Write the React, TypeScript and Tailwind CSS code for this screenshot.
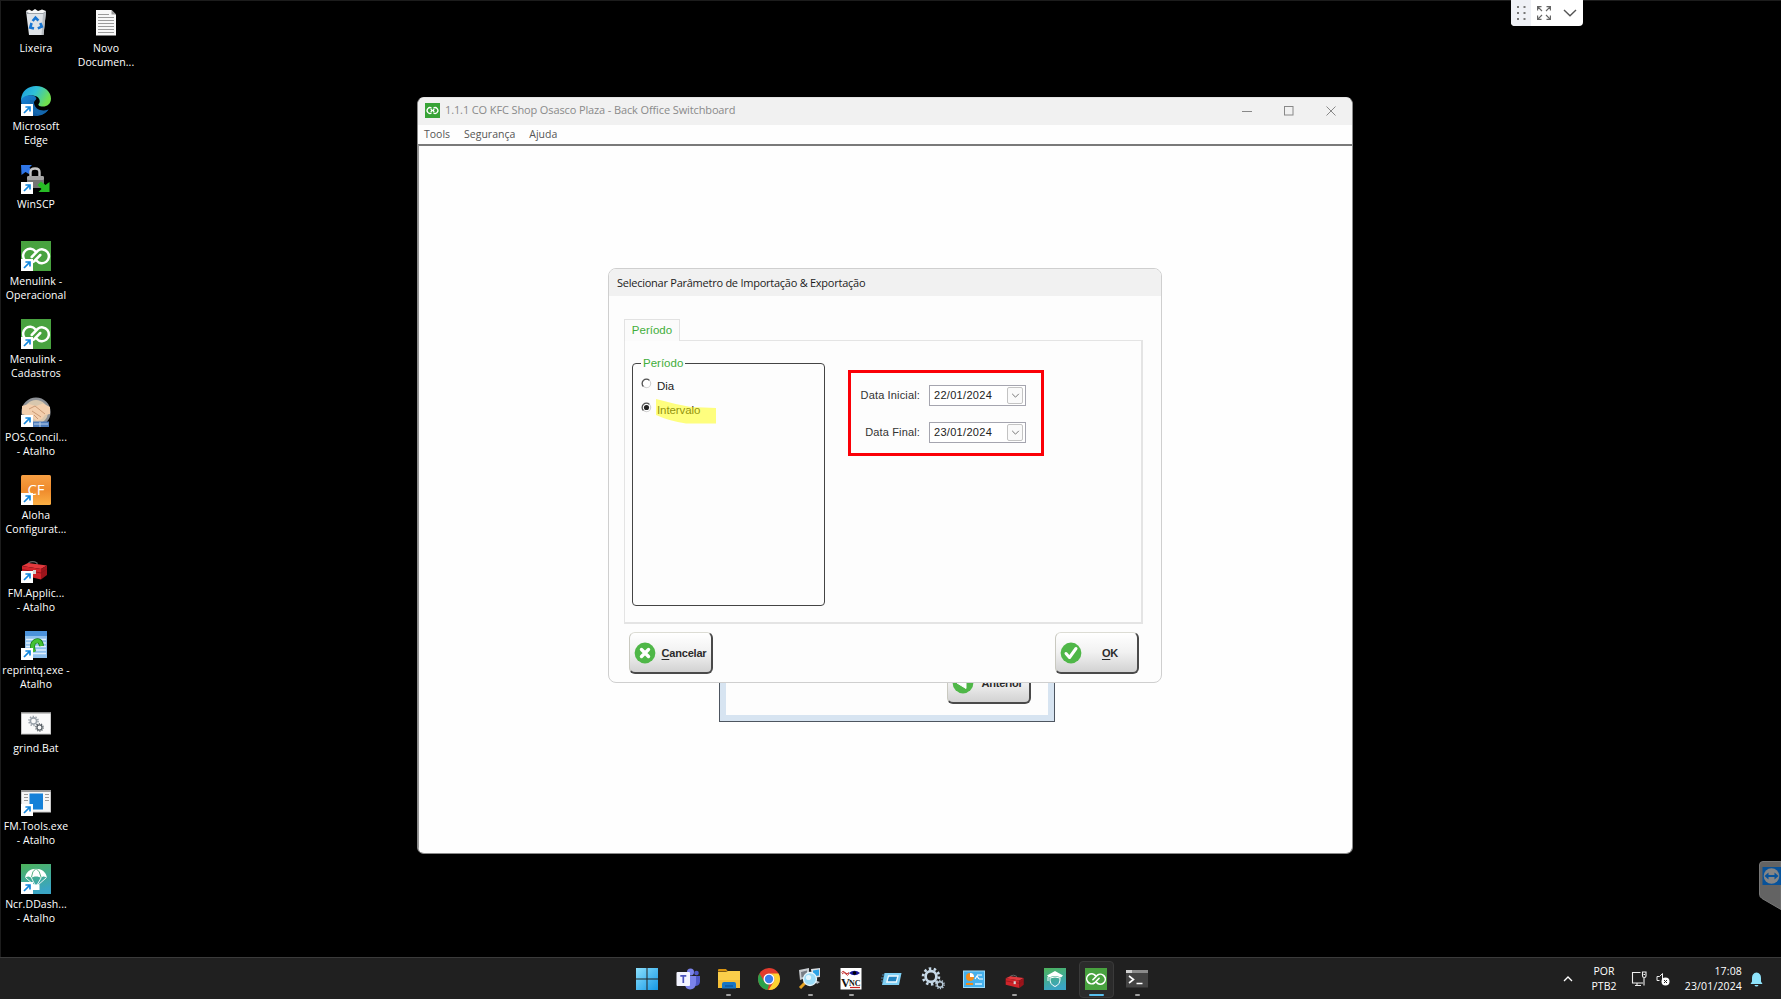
import React, { type ReactNode } from 'react';

/* ---------- Shared glyphs ---------- */

function ShortcutArrow() {
  return (
    <g>
      <rect x="0" y="18" width="12" height="12" fill="#fff" />
      <path d="M3 27 L8.6 21.4 M4.4 21 H9 V25.6" stroke="#1487dd" strokeWidth="1.7" fill="none" />
    </g>
  );
}

function Rings({ width = 2.5 }: { width?: number }) {
  return (
    <g fill="none" stroke="#fff" strokeWidth={width} strokeLinecap="round">
      <path d="M14.300 10.300 A6.900 6.900 0 1 0 13.200 20.200 L19.300 14" />
      <path d="M15.700 19.700 A6.900 6.900 0 1 0 16.800 9.800 L10.700 16" />
    </g>
  );
}

function Gear({ cx, cy, r, color }: { cx: number; cy: number; r: number; color: string }) {
  return (
    <g transform={`translate(${cx} ${cy})`} fill="none" stroke={color}>
      <circle r={r * 0.6} strokeWidth={r * 0.3} />
      <circle r={r * 0.88} strokeWidth={r * 0.3} strokeDasharray={`${r * 0.276} ${r * 0.277}`} />
    </g>
  );
}

function Toolbox() {
  return (
    <g>
      <path d="M8 12 V9.500 Q12 7.500 16 10 V13" fill="none" stroke="#666" strokeWidth="1.300" />
      <path d="M1 13 L7 10 L26 12.500 L20 16Z" fill="#e2393d" />
      <path d="M1 13 L20 16 V26.500 L1 22Z" fill="#d0242a" />
      <path d="M20 16 L26 12.500 V22 L20 26.500Z" fill="#9c141b" />
      <path d="M1 16.500 L20 20 L26 16" fill="none" stroke="#8e1218" strokeWidth="0.900" />
      <rect x="12" y="17" width="3" height="4" fill="#d5d5d5" />
    </g>
  );
}

function Icon({ children, shortcut = true }: { children: ReactNode; shortcut?: boolean }) {
  return (
    <svg viewBox="0 0 30 30" className="block h-[30px] w-[30px] shrink-0">
      {children}
      {shortcut && <ShortcutArrow />}
    </svg>
  );
}

/* ---------- Desktop icons ---------- */

const recycleBin = (
  <Icon shortcut={false}>
    <path d="M5 3 L25 3 L22.5 27 H8Z" fill="#dfe3e7" />
    <path d="M5 3 L25 3 L24.7 6 L5.3 6Z" fill="#9da3a9" />
    <path d="M5 3 L8 1.500 L11 3 L14 1 L17 3 L21 1.500 L25 3 L22 5 H8Z" fill="#f7f7f7" />
    <path d="M22 6 L20.5 27 H22.500 L25 4Z" fill="#b8bdc2" />
    <g fill="none" stroke="#1976d2" strokeWidth="2.6">
      <path d="M11.6 13 L14.5 9.6 L17.4 12.6" />
      <path d="M19.3 15 L20.8 18.6 L16.8 20.4" />
      <path d="M13 20.6 L9.2 19.6 L10.6 15" />
    </g>
  </Icon>
);

const edge = (
  <Icon>
    <defs>
      <linearGradient id="edgeTop" x1="0" y1="0" x2="1" y2="0.4">
        <stop offset="0" stopColor="#1a9be0" />
        <stop offset="0.5" stopColor="#2fc0d8" />
        <stop offset="1" stopColor="#6fe04f" />
      </linearGradient>
      <linearGradient id="edgeLow" x1="0" y1="0" x2="1" y2="1">
        <stop offset="0" stopColor="#1a86d8" />
        <stop offset="1" stopColor="#0c4c8f" />
      </linearGradient>
    </defs>
    <path d="M0 13 C1 5 7 0 15 0 C24 0 30 6 30 12.500 C30 18 26 20.500 22 20.500 C18 20.500 16.500 19 18 17.500 C20 15 18 10 12 9.500 C7 9 2 11 0 15Z" fill="url(#edgeTop)" />
    <path d="M0 14 C2 10 7 8.500 11.500 9.500 C15 10.300 16 12.500 15 13.500 C11 16 12 24 21 25 C24 25.200 26 24.500 27.500 23.500 C25 27.500 20 30 15 30 C6 30 0 23 0 14Z" fill="url(#edgeLow)" />
    <path d="M9 14 C9 22 13 29 20 29 C23 28 26 25.500 27.500 23.500 C22 26 12 24 13 14.500Z" fill="#1467ad" />
  </Icon>
);

const winscp = (
  <Icon>
    <path d="M0 1 H11 L8.500 3.500 L11 7 L8 10 L4.500 8 L0.500 11Z" fill="#2f76e8" />
    <path d="M9.500 13 V8 Q9.500 4.500 14 4.500 Q18.500 4.500 18.500 8 V13" fill="none" stroke="#c4c4c4" strokeWidth="2.400" />
    <rect x="6" y="12" width="17" height="12" rx="1.500" fill="#747474" />
    <rect x="6" y="12" width="17" height="4" rx="1.500" fill="#a5a5a5" />
    <path d="M28.500 28 H17.500 L20.500 25 L16.500 21 L20 17.500 L24.500 21 L28.500 18Z" fill="#27bd25" />
  </Icon>
);

const menulink = (
  <Icon>
    <rect width="30" height="30" fill="#48a23f" />
    <Rings />
  </Icon>
);

const pos = (
  <Icon>
    <circle cx="15" cy="15" r="13.300" fill="#d8c7ae" stroke="#8e9196" strokeWidth="2.600" />
    <path d="M1 9 L8 7 L15 9 L22 6.500 L29 10 V17 L24 18 L21 22 L16 24 L9 19 L1 17Z" fill="#f3cfae" />
    <path d="M8 12 L14 9 L24 17 M11 14 L20 20 M13 18 L17 22" stroke="#c08c66" strokeWidth="0.800" fill="none" />
    <rect x="12" y="24.500" width="16" height="5.500" fill="#4e7dbb" />
    <path d="M13 27 H27 M19 25 V30" stroke="#bcd1ea" />
  </Icon>
);

const configurator = (
  <Icon>
    <defs>
      <linearGradient id="orange" x1="0" y1="0" x2="0" y2="1">
        <stop offset="0" stopColor="#f7a044" />
        <stop offset="0.5" stopColor="#ef8a2c" />
        <stop offset="1" stopColor="#fbb044" />
      </linearGradient>
    </defs>
    <rect width="30" height="30" rx="1.500" fill="url(#orange)" />
    <text x="15" y="20" textAnchor="middle" fontFamily="Open Sans, sans-serif" fontSize="15" fontWeight="500" fill="#fff">
      CF
    </text>
  </Icon>
);

const toolbox = (
  <Icon>
    <Toolbox />
  </Icon>
);

const reprint = (
  <Icon>
    <rect x="4" y="1" width="22" height="27" fill="#8fc1ee" />
    <rect x="4" y="1" width="22" height="5" fill="#4b92da" />
    <path d="M5 9.500 H25 M5 13 H25 M5 16.500 H25 M5 20 H25 M5 23.500 H25" stroke="#e0effc" strokeWidth="1.300" />
    <path d="M12.500 22 Q10 14 14 11.500 Q19.500 9 20.500 16" fill="none" stroke="#16771a" strokeWidth="5" />
    <path d="M12.500 22 Q10 14 14 11.500 Q19.500 9 20.500 16" fill="none" stroke="#43c234" strokeWidth="3.600" />
  </Icon>
);

const grind = (
  <Icon shortcut={false}>
    <rect x="0.500" y="4.500" width="29" height="21.500" fill="#fafafa" stroke="#c9c9c9" />
    <rect x="0" y="4" width="30" height="1.500" fill="#8d8d8d" />
    <Gear cx={12.5} cy={13} r={5.2} color="#9ba3ab" />
    <Gear cx={18.5} cy={19.500} r={4.200} color="#596066" />
  </Icon>
);

const fmTools = (
  <Icon>
    <rect x="0.500" y="4.500" width="29" height="21.500" fill="#f6f6f6" stroke="#c9c9c9" />
    <rect x="0" y="4" width="30" height="2" fill="#999" />
    <rect x="8.500" y="7.500" width="13.500" height="16" fill="#1480d8" />
    <path d="M3 8.500 H7 M3 11.500 H7 M3 14.500 H7 M24 8.500 H28 M24 11.500 H28 M24 14.500 H28" stroke="#9a9a9a" />
  </Icon>
);

const dashboard = (
  <Icon>
    <defs>
      <linearGradient id="teal" x1="0" y1="0" x2="0.300" y2="1">
        <stop offset="0" stopColor="#4db35a" />
        <stop offset="1" stopColor="#3aa5c4" />
      </linearGradient>
    </defs>
    <rect width="30" height="30" fill="url(#teal)" />
    <path d="M4 14 C5 1.500 25 1.500 26 14 C24 12 21.500 12 20 14 C18 12 12 12 10.500 14 C8.500 12 6 12 4 14Z" fill="#fff" />
    <path d="M5 14 L13 21 M25 14 L17 21 M10.500 14 L14 21 M20 14 L16 21" fill="none" stroke="#fff" strokeWidth="0.900" />
    <path d="M10.500 13 Q11 7 15 4.500 Q19 7 20 13" fill="none" stroke="#45aa75" strokeWidth="0.900" />
    <rect x="12" y="20.500" width="6.500" height="5.500" fill="#fff" />
  </Icon>
);

const documentIcon = (
  <Icon shortcut={false}>
    <path d="M5 2 H20.500 L25 6.500 V27.500 H5Z" fill="#f8f8f8" />
    <path d="M20.500 2 V6.500 H25Z" fill="#9b9b9b" />
    <path d="M7 6.500 H18 M7 9.500 H23 M7 12.500 H23 M7 15.500 H23 M7 18.500 H23 M7 21.500 H23 M7 24.500 H23" stroke="#909090" strokeWidth="0.900" />
  </Icon>
);

type DesktopItem = { icon: ReactNode; lines: string[] };

const firstColumn: DesktopItem[] = [
  { icon: recycleBin, lines: ['Lixeira'] },
  { icon: edge, lines: ['Microsoft', 'Edge'] },
  { icon: winscp, lines: ['WinSCP'] },
  { icon: menulink, lines: ['Menulink -', 'Operacional'] },
  { icon: menulink, lines: ['Menulink -', 'Cadastros'] },
  { icon: pos, lines: ['POS.Concil...', '- Atalho'] },
  { icon: configurator, lines: ['Aloha', 'Configurat...'] },
  { icon: toolbox, lines: ['FM.Applic...', '- Atalho'] },
  { icon: reprint, lines: ['reprintq.exe -', 'Atalho'] },
  { icon: grind, lines: ['grind.Bat'] },
  { icon: fmTools, lines: ['FM.Tools.exe', '- Atalho'] },
  { icon: dashboard, lines: ['Ncr.DDash...', '- Atalho'] },
];

const secondColumn: DesktopItem[] = [{ icon: documentIcon, lines: ['Novo', 'Documen...'] }];

function DesktopColumn({ items }: { items: DesktopItem[] }) {
  return (
    <div className="flex w-[70px] flex-col">
      {items.map((item, i) => (
        <div key={i} className="flex h-[77.8px] flex-col items-center">
          {item.icon}
          <div className="mt-[3px] text-center text-[10.5px] leading-[14px] tracking-[0.08px] whitespace-nowrap text-white">
            {item.lines.map((line) => (
              <div key={line}>{line}</div>
            ))}
          </div>
        </div>
      ))}
    </div>
  );
}

/* ---------- Dialog pieces ---------- */

function ActionButton({ glyph, children }: { glyph: ReactNode; children: ReactNode }) {
  return (
    <button className="flex h-[42px] w-[84px] items-center rounded-[6px] border border-t-[#dcdcd4] border-r-2 border-r-[#4a4a4a] border-b-2 border-b-[#4a4a4a] border-l-[#c9c9c0] bg-linear-to-b from-white via-[#f1f1f1] to-[#d2d2d2] pl-[4px] font-['Liberation_Sans',sans-serif] text-[11px] font-bold tracking-[-0.2px] text-[#2b2b2b]">
      <svg viewBox="0 0 22 22" className="h-[22px] w-[22px] shrink-0">
        <circle cx="11" cy="11" r="10.400" fill="#4fb748" />
        {glyph}
      </svg>
      <span className="flex-1 pt-px pl-px text-center">{children}</span>
    </button>
  );
}

function DateField({ label, value }: { label: string; value: string }) {
  return (
    <div className="flex h-[21px] items-center justify-end">
      <span className="mr-[9px] text-[11px] tracking-[0.15px] text-[#333]">{label}</span>
      <div className="flex h-[21px] w-[97px] items-center justify-between border border-[#a5a5af] bg-white pr-[2px] pl-[4px]">
        <span className="text-[11px] tracking-[0.3px] text-[#222]">{value}</span>
        <span className="flex h-[17px] w-[16px] items-center justify-center rounded-[2px] border border-[#c3c3c3] bg-[#fafafa]">
          <svg viewBox="0 0 10 6" className="h-[5px] w-[9px]">
            <path d="M1 1 L5 5 L9 1" fill="none" stroke="#777" strokeWidth="1.200" />
          </svg>
        </span>
      </div>
    </div>
  );
}

function Radio({ label, checked }: { label: string; checked?: boolean }) {
  return (
    <label className="flex h-[24px] items-start">
      <svg viewBox="0 0 12 12" className="mt-[2px] h-[11px] w-[11px]">
        <circle cx="6" cy="6" r="4.600" fill="#fff" stroke="#d0d0d0" strokeWidth="1.200" />
        <path d="M2.600 9.200 A4.600 4.600 0 0 1 9.200 2.600" fill="none" stroke="#555" strokeWidth="1.400" />
        {checked && <circle cx="6" cy="6" r="2.800" fill="#222" />}
      </svg>
      <span className="ml-[5px] pt-[2px] text-[11.5px] leading-[16px] tracking-[-0.1px] text-[#222]">{label}</span>
    </label>
  );
}

function Dialog() {
  return (
    <div className="absolute top-[268px] left-[608px] flex h-[415px] w-[554px] flex-col overflow-hidden rounded-[8px] border border-[#cfcfcf] bg-[#fdfdfd] font-['Liberation_Sans',sans-serif]">
      <div className="flex h-[27px] shrink-0 items-center bg-[#f1f1f1] pt-px pl-[8px] font-['Open_Sans','Noto_Sans',sans-serif] text-[11px] tracking-[-0.25px] text-[#1c1c1c]">
        Selecionar Parâmetro de Importação &amp; Exportação
      </div>
      <div className="flex flex-col pt-[23px] pl-[15px]">
        <div className="z-10 -mb-px flex h-[22px] w-[56px] items-center justify-center border border-b-0 border-[#e2e2e2] bg-[#fbfbfb] text-[11.5px] text-[#3fae3a]">
          Período
        </div>
        <div className="flex h-[284px] w-[519px] border-2 border-t border-l border-[#e4e4e4] pt-[15px] pl-[7px]">
          <fieldset className="h-[250px] w-[193px] rounded-[4px] border border-[#444] px-[8px]">
            <legend className="px-[2px] text-[11.5px] leading-[14px] text-[#3fae3a]">Período</legend>
            <div className="mt-[6px]">
              <Radio label="Dia" />
              <div className="relative">
                <Radio label="Intervalo" checked />
                <svg viewBox="0 0 60 25" className="absolute top-[-1px] left-[15px] h-[25px] w-[60px]">
                  <path d="M0 0 Q18 5 35 8 L60 9 V24.500 H30 Q13 22 0 16Z" fill="#ffff00" fillOpacity="0.5" />
                </svg>
              </div>
            </div>
          </fieldset>
          <div className="mt-[14px] ml-[23px] flex h-[86px] w-[196px] flex-col gap-[16px] border-3 border-[#fb0007] pt-[12px] pr-[15px]">
            <DateField label="Data Inicial:" value="22/01/2024" />
            <DateField label="Data Final:" value="23/01/2024" />
          </div>
        </div>
      </div>
      <div className="mt-[8px] flex justify-between pr-[22px] pl-[20px]">
        <ActionButton glyph={<path d="M7.500 7.500 L14.500 14.500 M14.500 7.500 L7.500 14.500" stroke="#fff" strokeWidth="3.400" strokeLinecap="round" />}>
          <u className="underline-offset-2">C</u>ancelar
        </ActionButton>
        <ActionButton glyph={<path d="M6 11.500 L9.500 15.500 L16 6.500" fill="none" stroke="#fff" strokeWidth="3" strokeLinecap="round" strokeLinejoin="round" />}>
          <u className="underline-offset-2">O</u>K
        </ActionButton>
      </div>
    </div>
  );
}

function BackPanel() {
  return (
    <div className="absolute top-[640px] left-[719px] flex h-[82px] w-[336px] items-start justify-end border border-[#4d5560] bg-[#fdfdfd]">
      <div className="flex h-full w-full items-start justify-end border-[6px] border-t-0 border-[#d7e4f1] pt-[21px] pr-[17px]">
        <ActionButton glyph={<path d="M5 11 L14 5.500 V16.500Z" fill="#fff" stroke="#fff" strokeLinejoin="round" />}>Anterior</ActionButton>
      </div>
    </div>
  );
}

function MainWindow() {
  return (
    <div className="absolute top-[97px] left-[417px] flex h-[757px] w-[936px] flex-col overflow-hidden rounded-[7px] border border-[#8a8a8a] border-t-[#e5e5e5] bg-[#fefefe]">
      <div className="flex h-[27px] shrink-0 items-center bg-[#f1f1f1] pr-[16px] pb-[2px] pl-[7px]">
        <svg viewBox="0 0 15 15" className="h-[15px] w-[15px]">
          <rect width="15" height="15" fill="#37a336" />
          <path d="M6.500 5 A2.900 2.900 0 1 0 6.500 10 M8.500 5 A2.900 2.900 0 1 1 8.500 10 M5.800 6 L7 7.500 L5.800 9 M9.200 6 L8 7.500 L9.200 9" fill="none" stroke="#fff" strokeWidth="1.300" />
        </svg>
        <span className="ml-[5px] text-[11px] tracking-[-0.12px] whitespace-nowrap text-[#8a8a8a]">
          1.1.1 CO KFC Shop Osasco Plaza - Back Office Switchboard
        </span>
        <div className="ml-auto flex items-center gap-[32px] text-[#888]">
          <svg viewBox="0 0 10 10" className="h-[10px] w-[10px]"><path d="M0 5.500 H10" stroke="currentColor" /></svg>
          <svg viewBox="0 0 10 10" className="h-[10px] w-[10px]"><rect x="0.500" y="0.500" width="8.500" height="8.500" fill="none" stroke="currentColor" /></svg>
          <svg viewBox="0 0 10 10" className="h-[10px] w-[10px]"><path d="M0.500 0.500 L9.500 9.500 M9.500 0.500 L0.500 9.500" stroke="currentColor" /></svg>
        </div>
      </div>
      <div className="flex h-[19px] shrink-0 items-center gap-[14px] pl-[6px] text-[10.5px] text-[#555]">
        <span>Tools</span>
        <span>Segurança</span>
        <span>Ajuda</span>
      </div>
      <div className="flex-1 border-t-2 border-l border-[#7a7a7a] border-l-[#999]" />
    </div>
  );
}

/* ---------- Taskbar ---------- */

const taskIcons: { art: ReactNode; state?: 'open' | 'active' }[] = [
  {
    art: (
      <>
        <defs>
          <linearGradient id="win" x1="0" y1="0" x2="1" y2="1">
            <stop offset="0" stopColor="#8be0fd" />
            <stop offset="1" stopColor="#1598e6" />
          </linearGradient>
        </defs>
        <path d="M0 0 H10.500 V10.500 H0Z M11.500 0 H22 V10.500 H11.500Z M0 11.500 H10.500 V22 H0Z M11.500 11.500 H22 V22 H11.500Z" fill="url(#win)" />
      </>
    ),
  },
  {
    art: (
      <>
        <circle cx="13.500" cy="4" r="3.500" fill="#7b83eb" />
        <circle cx="19.500" cy="5" r="2.300" fill="#5059c9" />
        <path d="M16 8 H23 V14 Q22.500 18 18 18Z" fill="#5059c9" />
        <path d="M8 8 H19 V15 Q18.500 21.500 13 21.500 Q8.500 21 8 17Z" fill="#7b83eb" />
        <rect x="-0.500" y="4" width="13.500" height="14" rx="1" fill="#f3f4ff" />
        <path d="M3.300 7.800 H9.300 M6.300 7.800 V15" stroke="#4b53bc" strokeWidth="1.700" />
      </>
    ),
  },
  {
    state: 'open',
    art: (
      <>
        <path d="M0 2 Q0 1 1 1 H8 L10 3.500 H0Z" fill="#d9930f" />
        <path d="M0 4 H8 L10 3 H22 V20 H0Z" fill="#fbce4a" />
        <path d="M0 12 H22 V20 H0Z" fill="#f5be36" />
        <path d="M4 20.500 V16 Q4 14 6 14 H16 Q18 14 18 16 V20.500Z" fill="#1775c4" />
        <path d="M7 18 H15" stroke="#0b539a" strokeWidth="1.300" />
      </>
    ),
  },
  {
    art: (
      <>
        <circle cx="11" cy="11" r="11" fill="#e33b2e" />
        <path d="M1.500 5.500 L6.200 13.700 A5.500 5.500 0 0 0 11 16.500 L9.500 22 A11 11 0 0 1 1.500 5.500Z" fill="#2ba24c" />
        <path d="M11 5.500 H20.500 A11 11 0 0 1 10.500 22 L15.800 13.700 A5.500 5.500 0 0 0 11 5.500Z" fill="#fdd231" />
        <circle cx="11" cy="11" r="5.500" fill="#fff" />
        <circle cx="11" cy="11" r="4.200" fill="#3b7ded" />
      </>
    ),
  },
  {
    state: 'open',
    art: (
      <>
        <path d="M0 2 L10 0 V9 L1 12Z" fill="#c8ccd0" />
        <path d="M2 4 L8 2.500 V8 L2.500 9.500Z" fill="#777d84" />
        <path d="M12 1 L21 0 V9 L13 10Z" fill="#d9dde1" />
        <path d="M14 2.500 L20 1.500 V7.500 L14 8.500Z" fill="#2ba2e6" />
        <path d="M15 12 L21 14 L18 16Z" fill="#b7bcc1" />
        <path d="M6 15 L1 20" stroke="#e4a324" strokeWidth="3" />
        <circle cx="11" cy="11" r="6.500" fill="#9bdcf8" stroke="#e6f6fd" strokeWidth="1.300" />
        <circle cx="9.500" cy="9.500" r="2.600" fill="#e5f7fe" />
      </>
    ),
  },
  {
    state: 'open',
    art: (
      <>
        <rect width="21" height="21.500" x="0.500" fill="#fff" />
        <path d="M1.500 4.500 Q3 2 5 4.500 T9 4.500 M2 6 Q4 3 6 6 T9 5" stroke="#c02020" strokeWidth="0.900" fill="none" />
        <path d="M9 5 Q14.500 0.500 20 5 Q14.500 9.500 9 5Z" fill="#18189c" />
        <circle cx="14.500" cy="5" r="1.800" fill="#000" />
        <text x="1" y="18.500" fontFamily="Liberation Serif, serif" fontWeight="700" fontSize="12.500" fill="#111">V</text>
        <text x="9" y="17.500" fontFamily="Liberation Serif, serif" fontWeight="700" fontSize="8" fill="#111">NC</text>
        <path d="M10 19.500 H20" stroke="#c22" strokeWidth="1.200" />
      </>
    ),
  },
  {
    art: (
      <>
        <path d="M3.500 5 H20.500 L18 17 H1Z" fill="#7fd0f5" />
        <path d="M7.500 8 H17 L15.300 14 H5.800Z" fill="#2384c0" stroke="#eef9ff" strokeWidth="1.300" />
        <path d="M1 7 H4 M0 10 H3 M0 13 H3" stroke="#4f9fcb" strokeWidth="0.800" />
      </>
    ),
  },
  {
    art: (
      <>
        <Gear cx={9} cy={8.5} r={9} color="#c7d9e8" />
        <Gear cx={18} cy={16.500} r={4.700} color="#b9cbd9" />
      </>
    ),
  },
  {
    art: (
      <>
        <rect x="0.500" y="3" width="21" height="16.500" fill="#45b0ec" stroke="#9bdbfa" />
        <circle cx="7" cy="9" r="4" fill="#f28c1c" />
        <path d="M7 9 V5 A4 4 0 0 1 11 9Z" fill="#fff" />
        <path d="M12 11 L14 8 L16 11 M14 7 H19 M16 11 H20" fill="none" stroke="#fff" strokeWidth="1.200" />
        <path d="M3 16 H10" stroke="#f28c1c" strokeWidth="2" />
        <path d="M12 16 H19" stroke="#d8f2ff" strokeWidth="1.500" />
      </>
    ),
  },
  {
    state: 'open',
    art: (
      <g transform="translate(1 1) scale(0.720)">
        <Toolbox />
      </g>
    ),
  },
  {
    art: (
      <>
        <rect width="22" height="22" fill="url(#teal)" />
        <path d="M3 7.500 L11 3 L19 7.500 L17 9.500 Q11 6.500 5 9.500Z" fill="#fff" />
        <path d="M6 10 Q5.500 16.500 11 18.500 Q16.500 16.500 16 10 Q11 8 6 10Z M4 9 V13" fill="none" stroke="#fff" strokeWidth="1" />
      </>
    ),
  },
  {
    state: 'active',
    art: (
      <>
        <rect width="22" height="22" fill="#48a23f" />
        <g transform="translate(0.200 0.200) scale(0.720)">
          <Rings width={2.3} />
        </g>
      </>
    ),
  },
  {
    state: 'open',
    art: (
      <>
        <rect y="2" width="22" height="17.500" fill="#434343" />
        <rect y="2" width="22" height="3" fill="#8b8b8b" />
        <rect y="2" width="6" height="3" fill="#d0d0d0" />
        <path d="M3 8 L7.500 11.500 L3 15 M10.500 15.500 H16.500" fill="none" stroke="#fff" strokeWidth="1.600" />
      </>
    ),
  },
];

function Taskbar() {
  return (
    <div className="relative flex h-[42px] shrink-0 justify-center border-t border-[#3b3b3b] bg-[#202020]">
      <div className="flex pl-[3px]">
        {taskIcons.map(({ art, state }, i) => (
          <div key={i} className="flex w-[40.85px] flex-col items-center">
            <div
              className={
                state === 'active'
                  ? 'mt-[3px] flex h-[37px] w-[35px] justify-center rounded-[4px] border border-[#3a3a3a] bg-[#2b2b2b] pt-[6px]'
                  : 'mt-[4px] flex h-[36px] w-[35px] justify-center pt-[6px]'
              }
            >
              <svg viewBox="0 0 22 22" className="h-[22px] w-[22px] overflow-visible">{art}</svg>
            </div>
            {state === 'open' && <span className="-mt-[4px] h-[2px] w-[5px] rounded-full bg-[#a0a0a0]" />}
            {state === 'active' && <span className="-mt-[4px] h-[2px] w-[15px] rounded-full bg-[#58bfee]" />}
          </div>
        ))}
      </div>
      <div className="absolute top-0 right-[18px] flex h-[42px] items-center text-[10.5px] leading-[15px] text-white">
        <svg viewBox="0 0 10 6" className="mr-[18px] h-[6px] w-[10px]"><path d="M1 5 L5 1 L9 5" fill="none" stroke="#fff" strokeWidth="1.300" /></svg>
        <div className="mr-[14px] w-[26px] text-center"><div>POR</div><div>PTB2</div></div>
        <svg viewBox="0 0 16 16" className="mr-[9px] h-[16px] w-[16px]" fill="none" stroke="#eee" strokeWidth="1.100">
          <path d="M9.500 1.500 H1.500 V12 H12 M4 14.500 H10 M6 12 V14.500 M13 7 V14.500" />
          <path d="M11.500 1 H15 V5 Q15 6.500 13.300 6.500 Q11.500 6.500 11.500 5Z M12.500 3.500 H14" />
        </svg>
        <svg viewBox="0 0 14 14" className="mr-[14px] h-[14px] w-[14px]">
          <path d="M6.500 9 V1.500 L3.500 4.500 H1 V8.500 H3.500" fill="none" stroke="#eee" />
          <circle cx="9.500" cy="9.500" r="4" fill="#fff" />
          <path d="M8 8 L11 11 M11 8 L8 11" stroke="#222" />
        </svg>
        <div className="mr-[8px] w-[58px] text-right tracking-[0.15px]"><div>17:08</div><div>23/01/2024</div></div>
        <svg viewBox="0 0 13 15" className="h-[15px] w-[13px]">
          <path d="M6.500 0.500 Q11 1 11 6 V9.500 L12.500 12 H0.500 L2 9.500 V6 Q2 1 6.500 0.500Z M4.500 13 H8.500 Q8 14.500 6.500 14.500 Q5 14.500 4.500 13Z" fill="#8fe3fb" />
        </svg>
      </div>
    </div>
  );
}

/* ---------- Overlays ---------- */

function SessionHandle() {
  return (
    <div className="absolute top-0 left-[1511px] flex h-[26px] w-[72px] overflow-hidden rounded-b-[4px] bg-white">
      <div className="flex w-[20px] items-center justify-center bg-[#eff1f6]">
        <svg viewBox="0 0 9 15" className="h-[15px] w-[9px]" fill="#777">
          <path d="M0 0 H2 V2 H0Z M6.500 0 H8.500 V2 H6.500Z M0 6 H2 V8 H0Z M6.500 6 H8.500 V8 H6.500Z M0 12 H2 V14 H0Z M6.500 12 H8.500 V14 H6.500Z" />
        </svg>
      </div>
      <svg viewBox="0 0 14 14" className="mt-[6px] ml-[6px] h-[14px] w-[14px]" fill="none" stroke="#666" strokeWidth="1.200">
        <path d="M0.600 4.500 V0.600 H4.500 M0.600 0.600 L5 5 M9.500 0.600 H13.400 V4.500 M13.400 0.600 L9 5 M0.600 9.500 V13.400 H4.500 M0.600 13.400 L5 9 M9.500 13.400 H13.400 V9.500 M13.400 13.400 L9 9" />
      </svg>
      <svg viewBox="0 0 14 8" className="mt-[9px] ml-[12px] h-[8px] w-[14px]">
        <path d="M1 1 L7 6.800 L13 1" fill="none" stroke="#555" strokeWidth="1.400" />
      </svg>
    </div>
  );
}

function SideTab() {
  return (
    <svg viewBox="0 0 22 49" className="absolute top-[861px] right-0 h-[49px] w-[22px]">
      <path d="M22 0.500 H4 Q0.500 0.500 0.500 4 V33 Q0.500 36 3 37.500 L22 48.500Z" fill="#636363" stroke="#777" />
      <rect x="3.500" y="6" width="18.500" height="18" fill="#07529a" />
      <circle cx="12.500" cy="15" r="7.800" fill="#858585" />
      <path d="M5.500 15 L9.500 11.500 V14 H15.500 V11.500 L19.500 15 L15.500 18.500 V16 H9.500 V18.500Z" fill="#07529a" />
    </svg>
  );
}

export default function App() {
  return (
    <div className="relative flex h-[999px] w-[1781px] flex-col overflow-hidden bg-black font-['Open_Sans','Noto_Sans',sans-serif]">
      <div className="flex min-h-0 flex-1 border-t border-l border-[#1c1c1c] pt-[7px]">
        <DesktopColumn items={firstColumn} />
        <DesktopColumn items={secondColumn} />
      </div>
      <MainWindow />
      <BackPanel />
      <Dialog />
      <SessionHandle />
      <SideTab />
      <Taskbar />
    </div>
  );
}
